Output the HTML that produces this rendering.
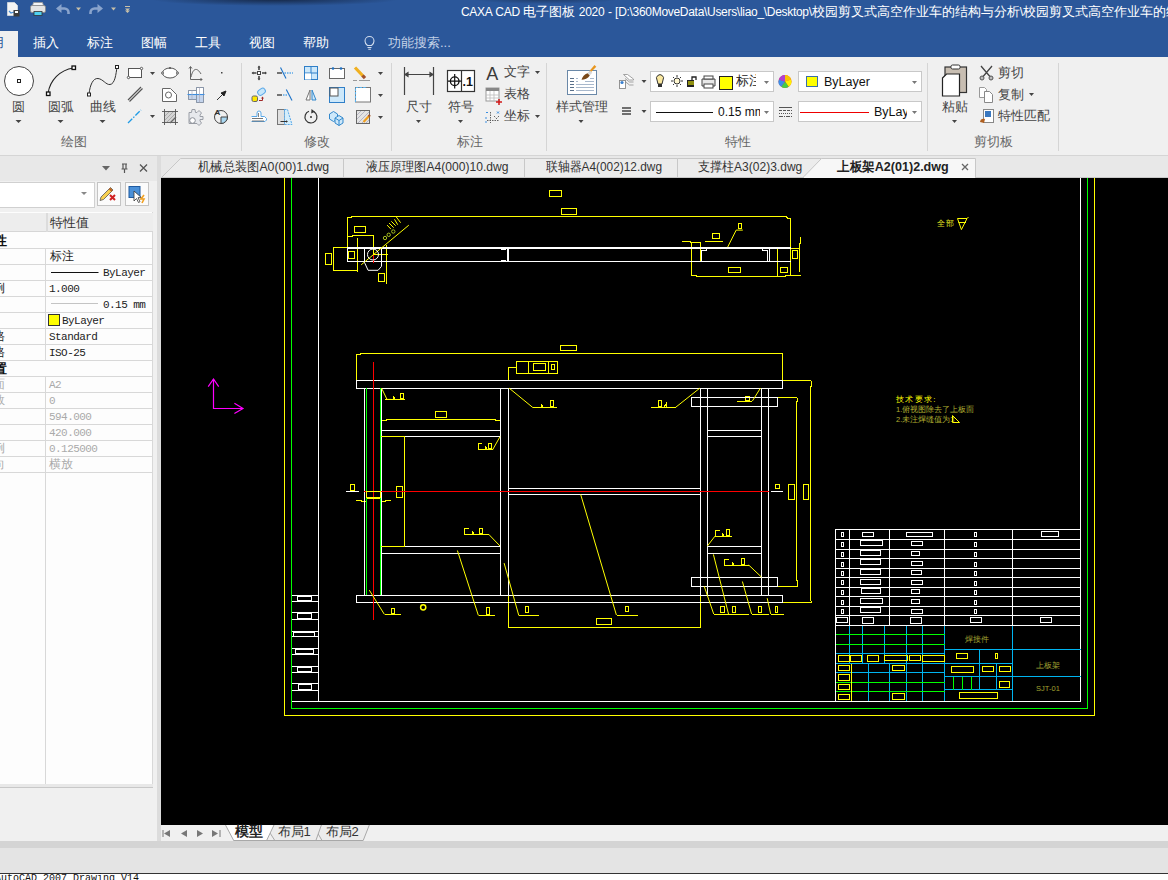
<!DOCTYPE html>
<html><head><meta charset="utf-8">
<style>
*{margin:0;padding:0;box-sizing:border-box}
html,body{width:1168px;height:880px;overflow:hidden;background:#f0f0f0;font-family:"Liberation Sans",sans-serif;position:relative}
.a{position:absolute;white-space:nowrap}
#hdr{left:0;top:0;width:1168px;height:57px;background:#2b579a}
.menu{color:#fff;font-size:13px;top:35px;line-height:16px}
#ribbon{left:0;top:57px;width:1168px;height:99px;background:#f0f0f0;border-bottom:1px solid #d5d5d5}
.rl{font-size:13px;color:#444;line-height:16px}
.mono{font-family:"Liberation Mono",monospace;font-size:11px;line-height:16px;letter-spacing:-0.55px}
.tab{top:159px;font-size:13px;color:#333;line-height:16px}
.z{font-size:13px;letter-spacing:0}
.sep{width:1px;background:#d5d5d5}
</style></head>
<body>
<div id="hdr" class="a"></div>
<div class="a" style="left:150px;top:-7px;width:250px;height:13px;background:radial-gradient(ellipse at center,rgba(15,25,45,0.75),rgba(15,25,45,0) 70%)"></div>
<div class="a" style="left:470px;top:-6px;width:150px;height:10px;background:radial-gradient(ellipse at center,rgba(15,25,45,0.5),rgba(15,25,45,0) 70%)"></div>
<div class="a" style="left:461px;top:5px;font-size:12px;color:#fff;line-height:14px;letter-spacing:-0.3px;word-spacing:0.5px">CAXA CAD <span class="z">电子图板</span> 2020 - [D:\360MoveData\Users\liao_\Desktop\<span class="z">校园剪叉式高空作业车的结构与分析</span>\<span class="z">校园剪叉式高空作业车的结构</span></div>
<!-- active menu tab -->
<div class="a" style="left:0;top:31px;width:18px;height:26px;background:#f0f0f0"></div>
<div class="a menu" style="left:-9px;color:#2b579a">用</div>
<div class="a menu" style="left:33px">插入</div>
<div class="a menu" style="left:87px">标注</div>
<div class="a menu" style="left:141px">图幅</div>
<div class="a menu" style="left:195px">工具</div>
<div class="a menu" style="left:249px">视图</div>
<div class="a menu" style="left:303px">帮助</div>
<div class="a menu" style="left:388px;color:#c5d3e8">功能搜索...</div>
<svg class="a" style="left:362px;top:35px" width="16" height="16"><path d="M5.5 10.5C3.5 9 3 7.5 3 6a4.5 4.5 0 0 1 9 0c0 1.5-.5 3-2.5 4.5z" fill="none" stroke="#d0dced" stroke-width="1.1"/><path d="M5.5 12.5h4M6.3 14.3h2.6" stroke="#d0dced" stroke-width="1.1"/></svg>

<div id="ribbon" class="a"></div>
<!-- ===== quick access ===== -->
<svg class="a" style="left:0;top:0" width="140" height="24" viewBox="0 0 140 24">
  <!-- save icon -->
  <path d="M7.5 2.5h7l3 3v10h-10z" fill="#f4f4f4" stroke="#c9d2dd"/>
  <path d="M9 11l2 2 3-1" stroke="#4a8fd6" fill="none" stroke-width="1.2"/>
  <rect x="13.5" y="10" width="6" height="6.5" fill="#3d3d3d"/>
  <rect x="15" y="11" width="3" height="2" fill="#fff"/>
  <!-- printer -->
  <path d="M33.5 2.5h9l1 3h-11z" fill="#f4f4f4" stroke="#999" stroke-width="0.8"/>
  <rect x="30.5" y="5.5" width="15" height="7" rx="1.5" fill="#e4e4e4" stroke="#888" stroke-width="0.8"/>
  <rect x="34" y="11.5" width="8" height="4" fill="#4fd0f0" stroke="#333" stroke-width="0.8"/>
  <!-- undo -->
  <path d="M56 8.5L61.5 4V13z" fill="#8aa4cc"/>
  <path d="M61 8.5h3.5a4 4 0 0 1 4 4v1.5" stroke="#8aa4cc" stroke-width="2.6" fill="none"/>
  <path d="M76 7.5h5l-2.5 3z" fill="#c8c0a8"/>
  <!-- redo -->
  <path d="M103 8.5L97.5 4V13z" fill="#8aa4cc"/>
  <path d="M98 8.5h-3.5a4 4 0 0 0-4 4v1.5" stroke="#8aa4cc" stroke-width="2.6" fill="none"/>
  <path d="M111 7.5h5l-2.5 3z" fill="#c8c0a8"/>
  <path d="M125 6.5h5" stroke="#c8c0a8" stroke-width="1"/><path d="M125 8.5h5l-2.5 2.5z M125 10.5h5l-2.5 2.5z" fill="#c8c0a8"/>
</svg>

<!-- ===== ribbon: 绘图 ===== -->
<svg class="a" style="left:0;top:57px" width="1168" height="99" viewBox="0 57 1168 99">
 <g fill="none" stroke="#3a3a3a" stroke-width="1">
  <circle cx="19" cy="81" r="14.5" fill="#fff" stroke="#444"/>
  <rect x="17.5" y="79.5" width="3" height="3" fill="#fff" stroke="#222"/>
  <path d="M48 93.5C50 80 60 70 73.5 68" stroke="#222" stroke-width="1.1"/>
  <rect x="46.5" y="92" width="3.5" height="3.5" fill="#fff" stroke="#111" stroke-width="1.3"/>
  <rect x="72" y="66" width="3.5" height="3.5" fill="#fff" stroke="#111" stroke-width="1.3"/>
  <path d="M89 94C90 85 93 78 98 78.5C103 79 106 85 110 84.5C115 84 116 74 117 67" stroke="#333"/>
  <rect x="87.5" y="93" width="3" height="3" fill="#fff" stroke="#222"/>
  <rect x="115.5" y="65.5" width="3" height="3" fill="#fff" stroke="#222"/>
  <!-- small icons -->
  <rect x="128.5" y="68.5" width="13" height="9" fill="#fff" stroke="#555"/>
  <circle cx="128.5" cy="77.5" r="1.2" fill="#fff" stroke="#555"/>
  <circle cx="141.5" cy="68.5" r="1.2" fill="#fff" stroke="#555"/>
  <ellipse cx="170" cy="73" rx="7.5" ry="5" fill="#fff" stroke="#555"/><circle cx="162.5" cy="73" r="1" fill="#fff" stroke="#555"/><circle cx="177.5" cy="73" r="1" fill="#fff" stroke="#555"/><circle cx="170" cy="68" r="1" fill="#555" stroke="none"/>
  <path d="M190.5 67v12.5H202M189 68.5l1.5-2 1.5 2M200.5 78l1.5 1.5-1.5 1.5M191 77C193 68 197 67 201 74" stroke="#555" stroke-width="0.9"/>
  <rect x="221" y="72" width="1.5" height="1.5" fill="#444" stroke="none"/>
  <path d="M128 100l13-13M129.5 101.5l13-13" stroke="#555" stroke-width="1.2"/>
  <path d="M162.5 101.5v-13h8l6 6v7z" fill="#fff" stroke="#666"/>
  <circle cx="168.5" cy="95" r="3" stroke="#666"/>
  <path d="M188.5 90.5h8v9h-8z" fill="#fff" stroke="#8a96a8"/><path d="M188.5 95h8v4.5h-8z" fill="#c4d4ec" stroke="none"/><path d="M196.5 87.5h7v15h-7z" fill="#fff" stroke="#8a96a8"/><path d="M196.5 95h7v7.5h-7z" fill="#c4d4ec" stroke="none"/><path d="M196.5 87.5h7v15h-7zM188.5 90.5h8v9h-8z" fill="none" stroke="#8a96a8"/><path d="M187.5 94.5h17" stroke="#3e8ee0" stroke-width="1.1"/><path d="M192 90.5v9M199.5 87.5v15" stroke="#aab" stroke-width="0.7"/>
  <path d="M217 100l5-5" stroke="#333"/>
  <path d="M226 91l-5 2 3 3z" fill="#222" stroke="#222"/>
  <path d="M128 123l13-13" stroke="#1e9be6" stroke-width="1.3" stroke-dasharray="6 1.5 1.5 1.5"/>
  <rect x="164.5" y="111.5" width="11" height="11" fill="#d4d4d4" stroke="none"/><path d="M165 116l4-4M165 120l8-8M167 122l8-8M171 122l4-4" stroke="#a0a0a0" stroke-width="0.8"/><path d="M162 111.5h16M162 122.5h16M164.5 109v16M175.5 109v16" stroke="#555" stroke-width="0.9"/><path d="M170 123l6-6" stroke="#666" stroke-width="1.2"/>
  <path d="M189 112.5h2.5l.5-3h3l.5 3h1.5l2-2 2.5 2.5-1.5 2v1.5h3v3h-3v1.5l1.5 2-2.5 2.5-2-2h-8z" fill="#e6e8ec" stroke="#9a9ea6"/>
  <circle cx="192.5" cy="120.5" r="2.8" fill="#fff" stroke="#8a8e96"/>
  <circle cx="221" cy="117" r="6.5" stroke="#444"/>
  <path d="M221 117h6.5a6.5 6.5 0 0 1-6.5 6.5z" fill="#aad8f2" stroke="#444"/>
 </g>
 <g fill="#444">
  <path d="M15.5 120h6l-3 3z"/><path d="M57.5 120h6l-3 3z"/><path d="M99.5 120h6l-3 3z"/>
  <path d="M150 72h5l-2.5 3z"/><path d="M150 115h5l-2.5 3z"/>
 </g>
 <text x="214.5" y="115" font-size="8" font-weight="bold" fill="#333" font-family="Liberation Sans">A</text>
 <!-- separators -->
 <g stroke="#d5d5d5"><path d="M241.5 63v88M391.5 63v88M546.5 63v88M927.5 63v88M1058.5 63v88"/></g>

 <!-- ===== 修改 ===== -->
 <g fill="none" stroke="#444">
  <path d="M252.5 73h4M262 73h4M259 66.5v3.5M259 76v3.5" stroke="#444" stroke-width="1.6"/><path d="M251.5 73l2-1.5v3zM267 73l-2-1.5v3zM259 65.5l-1.5 2h3zM259 80.5l-1.5-2h3z" fill="#444" stroke="none"/><rect x="257.5" y="71.5" width="3" height="3" fill="#fff" stroke="#444"/>
  <path d="M277 73h5" stroke="#555" stroke-width="1.6"/><path d="M284.5 73h8.5" stroke="#5aa8e8" stroke-width="1.4" stroke-dasharray="1.5 1"/><path d="M280.5 67.5l5.5 11" stroke="#1e73c8" stroke-width="1.1"/>
  <rect x="304.5" y="66.5" width="13" height="13" fill="#cde8fa" stroke="#2f7fc8"/><path d="M311 66v14M304 73h14" stroke="#2f7fc8"/><rect x="305" y="73.5" width="6" height="6" fill="#fff" stroke="none"/>
  <rect x="329.5" y="68.5" width="15" height="10" fill="#fff" stroke="#666"/><circle cx="333" cy="68.5" r="1.3" fill="#1e6fc0" stroke="none"/><circle cx="341" cy="68.5" r="1.3" fill="#1e6fc0" stroke="none"/>
  <path d="M355 67.5l8.5 9" stroke="#f0b020" stroke-width="3.2"/><path d="M362.5 75.5l2.5 2.7" stroke="#a0522d" stroke-width="3.2"/><path d="M353 80.5h4M359 80.5h11" stroke="#999"/>
  <rect x="257.5" y="89" width="8" height="5.5" rx="2.5" transform="rotate(-35 261.5 91.7)" fill="#c6e6fa" stroke="#5aa8e8"/><rect x="252" y="96" width="5.5" height="5.5" rx="1.5" fill="#ffe800" stroke="#666"/><path d="M259 100.5h3.5v-2.5" stroke="#a02828" stroke-width="1"/><path d="M261 98.5l1.5-2 1.5 2z" fill="#a02828" stroke="none"/>
  <path d="M277 95h5" stroke="#555" stroke-width="1.6"/><path d="M283 95h5" stroke="#5aa8e8" stroke-width="1.4" stroke-dasharray="1.5 1"/><path d="M286.3 89.5l5.7 11" stroke="#1e73c8" stroke-width="1.1"/>
  <path d="M310 90l-4 10h4z" fill="#fff" stroke="#777"/><path d="M312 90l4 10h-4z" fill="#cde8fa" stroke="#3388cc"/>
  <rect x="329.5" y="87.5" width="15" height="15" fill="#cde8fa" stroke="#2f7fc8"/><rect x="330" y="88" width="8" height="8" fill="#fff" stroke="#555"/>
  <rect x="355.5" y="87.5" width="15" height="14.5" fill="#fff" stroke="#777"/><path d="M355.5 102V87.5H367" stroke="#5ab4f0" stroke-dasharray="2.5 1.2" stroke-width="1.1"/>
  <path d="M251.5 116.5h5.5v-3.5a2 2 0 0 1 4 0v3.5h3.5l2 2v1.5l-1.5 1.5H251.5" fill="#fff" stroke="#5aa8e8"/><path d="M252 118.5h11M252 121h12" stroke="#666" stroke-width="0.9"/><path d="M258.5 113v4" stroke="#666" stroke-width="0.8"/>
  <rect x="277.5" y="109.5" width="7" height="15" fill="#e0e0e0" stroke="#777"/><path d="M284.5 109.5h3l4.5 15h-7.5z" fill="#d4eefc" stroke="#5aa8e8" stroke-dasharray="2 1"/><path d="M280.5 121.5h6.5" stroke="#333"/><path d="M288 121.5l-2-1.3v2.6z" fill="#333" stroke="none"/>
  <path d="M309 111.3A6 6 0 1 0 314 111.8" stroke="#333" stroke-width="1.2"/><path d="M311.5 109l3.5 2.8-3.8 1.8z" fill="#333" stroke="none"/><circle cx="311" cy="117" r="1" fill="#333" stroke="none"/>
  <path d="M329.5 114l4-2.5 4 2.5v5l-4 2.5-4-2.5z" fill="#cde8fa" stroke="#3388cc"/><path d="M335 118l4-2.5 4 2.5v5l-4 2.5-4-2.5z" fill="#cde8fa" stroke="#3388cc"/><path d="M335 118l4 2.5 4-2.5M339 120.5v5" stroke="#3388cc"/>
  <rect x="356.5" y="110.5" width="13" height="13" fill="#e4e4e4" stroke="#666"/><path d="M357 115l4-4M357 119l8-8M358 123l11-11M362 123l7-7M366 123l3-3" stroke="#aab" stroke-width="0.8"/><path d="M363.5 122l6-6.5" stroke="#f0a020" stroke-width="2.2"/><path d="M368.5 116.5l1.5-1.5" stroke="#a0522d" stroke-width="2.2"/>
 </g>
 <g fill="#444"><path d="M378 72h5l-2.5 3z"/><path d="M378 94h5l-2.5 3z"/><path d="M378 116h5l-2.5 3z"/></g>

 <!-- ===== 标注 ===== -->
 <g fill="none" stroke="#444" stroke-width="1.2">
  <path d="M404.5 67v28M433.5 67v28M405 74.5h28"/>
  <path d="M405 74.5l3-2v4zM433 74.5l-3-2v4z" fill="#444"/>
  <rect x="447.5" y="70.5" width="27" height="21" fill="#fff" stroke="#333"/><path d="M461.5 70v22" stroke="#333"/>
  <circle cx="454.7" cy="81.2" r="4.3" stroke="#111" stroke-width="1.3"/><path d="M448 81.2h13.5M454.7 74v14.5" stroke="#111" stroke-width="1.2"/>
  <rect x="486" y="88" width="13" height="13" fill="#fff" stroke="#999" stroke-width="1"/><rect x="486" y="88" width="13" height="3" fill="#888" stroke="none"/>
  <path d="M490 91v10M494 91v10M486 95h13M486 98h13" stroke="#bbb" stroke-width="0.8"/>
  <path d="M496 102h6M499 99v6" stroke="#d01818" stroke-width="1.5"/>
  <path d="M490.5 112v11M487 120.5h12M494 116l3 3M499 116l-3 3" stroke="#555" stroke-width="0.9" stroke-dasharray="1.5 1"/><path d="M486 112.5h2M497 111.5l2 2M499 111.5l-2 2M486 121v2M486 117v2" stroke="#3a8ee0" stroke-width="1"/>
 </g>
 <text x="486.3" y="79.6" font-size="18" fill="#3a3a3a" font-family="Liberation Sans">A</text>
 <text x="462.5" y="86" font-size="12.5" font-weight="bold" fill="#111" font-family="Liberation Sans">.1</text>
 <g fill="#444"><path d="M416 120h5l-2.5 3z"/><path d="M458 120h5l-2.5 3z"/><path d="M535 71h5l-2.5 3z"/><path d="M535 115h5l-2.5 3z"/></g>

 <!-- ===== 特性 ===== -->
 <rect x="567.5" y="70.5" width="29" height="24" fill="#fff" stroke="#6a88a8" shape-rendering="crispEdges"/>
 <g stroke-width="1" shape-rendering="crispEdges"><path d="M570 78.5h4M570 81.5h4M570 84.5h4M570 87.5h4M570 90.5h4" stroke="#5a708a"/><path d="M576 78.5h2M590 78.5h4M576 81.5h2M585 81.5h9M576 84.5h18M576 87.5h18M576 90.5h18" stroke="#a8b8cc"/></g>
 <path d="M589 71.5l5.5-6.5 1.8 1.8-6 6z" fill="#e8961e"/><path d="M587.5 73l2.5-2.5 2.3 2.3-2.5 2.5z" fill="#d8d8d8"/>
 <path d="M587.5 73.2l2.3 2.3c-2 3-5 4.3-8.3 4.3 0.8-3 3-5.5 6-6.6z" fill="#7a4818"/>
 <g fill="#444"><path d="M578.5 120h5l-2.5 3z"/><path d="M641.5 80h5l-2.5 3z"/><path d="M641.5 110h5l-2.5 3z"/></g>
 <path d="M623.5 74.5h4l6 4.5v1h-4z" fill="#fff" stroke="#999" stroke-width="0.9"/><path d="M625 78.5l4.5 3.5h4M625 81.5l4.5 3.5h4" fill="none" stroke="#999" stroke-width="0.9"/>
 <rect x="619.5" y="80.5" width="6" height="8" fill="#fff" stroke="#888" stroke-width="0.9"/><circle cx="622" cy="82.5" r="1.6" fill="#3a80d0"/>
 <path d="M622 108h9M622 111h9M622 114h9" stroke="#444" stroke-width="1.3"/>
 <!-- combos -->
 <g fill="#fff" stroke="#c8c8c8">
  <rect x="650.5" y="71.5" width="123" height="20"/>
  <rect x="650.5" y="101.5" width="123" height="20"/>
  <rect x="798.5" y="71.5" width="123" height="20"/>
  <rect x="798.5" y="101.5" width="123" height="20"/>
 </g>
 <g fill="#777"><path d="M764 81h5l-2.5 3z"/><path d="M764 111h5l-2.5 3z"/><path d="M912 81h5l-2.5 3z"/><path d="M912 111h5l-2.5 3z"/></g>
 <!-- bulb -->
 <path d="M657 80a3.5 3.5 0 1 1 6 0l-1 4h-4z" fill="#fbe9a0" stroke="#333"/><rect x="658" y="84" width="4" height="3" fill="#333"/>
 <circle cx="677" cy="81" r="3" fill="#fff7d0" stroke="#333"/><path d="M677 75v2M677 85v2M671 81h2M681 81h2M673 77l1 1M680 84l1 1M681 77l-1 1M674 84l-1 1" stroke="#333"/>
 <path d="M687 80h7v7h-7z" fill="#222"/><path d="M688 82h6M688 84h6" stroke="#ff0"/><path d="M692 80v-3h4v3" fill="none" stroke="#222" stroke-width="1.3"/>
 <path d="M702 79h13v7h-13z" fill="#e8e8e8" stroke="#444"/><rect x="704" y="76" width="9" height="3" fill="#fff" stroke="#444"/><rect x="704" y="84" width="9" height="4" fill="#fff" stroke="#444"/>
 <rect x="719.5" y="76.5" width="13" height="13" fill="#ffff00" stroke="#222"/>
 <path d="M656 112.5h57" stroke="#111" shape-rendering="crispEdges"/>
 <circle cx="785" cy="81.5" r="6.5" fill="#e33"/><path d="M785 81.5l0-6.5a6.5 6.5 0 0 1 6.2 4.5z" fill="#f9c400"/><path d="M785 81.5l6.2-2a6.5 6.5 0 0 1-2.5 7.2z" fill="#fff000"/><path d="M785 81.5l3.7 5.3a6.5 6.5 0 0 1-7.5 0z" fill="#4c4"/><path d="M785 81.5l-3.8 5.3a6.5 6.5 0 0 1-2.3-7.4z" fill="#3a8ee8"/><path d="M785 81.5l-6.1-2a6.5 6.5 0 0 1 6.1-4.5z" fill="#b040d0"/>
 <g stroke="#555" stroke-width="1" shape-rendering="crispEdges"><path d="M779 107.5h13"/><path d="M779 110.5h13" stroke-dasharray="3 1"/><path d="M779 113.5h13" stroke-dasharray="1 1"/><path d="M779 116.5h13" stroke-dasharray="4 1 1 1"/></g>
 <rect x="806.5" y="76.5" width="11" height="10" fill="#ffff00" stroke="#3a6ea8"/>
 <path d="M800 112.5h69" stroke="#e00" stroke-width="1" shape-rendering="crispEdges"/>

 <!-- ===== 剪切板 ===== -->
 <rect x="945" y="67" width="21.5" height="25.5" fill="#c8beb2" stroke="#333" stroke-width="1.2"/>
 <rect x="951" y="65" width="9" height="4" rx="1.5" fill="#fff" stroke="#333"/>
 <path d="M942.5 78l4-4h13v22h-17z" fill="#fff" stroke="#222" stroke-width="1.2"/>
 <path d="M981 66l11 13M992 66l-11 13" stroke="#444" stroke-width="1.3"/><circle cx="982" cy="78" r="2" fill="#bbb" stroke="#555"/><circle cx="991" cy="78" r="2" fill="#bbb" stroke="#555"/>
 <path d="M979.5 87.5h5l2 2v8h-7z" fill="#fff" stroke="#999"/><path d="M984.5 91.5h5l3 3v8h-8z" fill="#fff" stroke="#888"/>
 <rect x="983.5" y="109.5" width="10" height="13" fill="#fff" stroke="#888"/><rect x="985" y="111" width="6" height="6" fill="#3a78c0"/>
 <path d="M980 122c0-3 3-4 5-3l-1 4z" fill="#b06020"/>
 <g fill="#444"><path d="M952 120h5l-2.5 3z"/><path d="M1029 93h5l-2.5 3z"/></g>
</svg>
<!-- ribbon labels -->
<div class="a rl" style="left:12px;top:99px;font-size:12.5px">圆</div>
<div class="a rl" style="left:48px;top:99px;font-size:12.5px">圆弧</div>
<div class="a rl" style="left:90px;top:99px;font-size:12.5px">曲线</div>
<div class="a rl" style="left:61px;top:134px;color:#666">绘图</div>
<div class="a rl" style="left:304px;top:134px;color:#666">修改</div>
<div class="a rl" style="left:406px;top:99px">尺寸</div>
<div class="a rl" style="left:448px;top:99px">符号</div>
<div class="a rl" style="left:504px;top:64px">文字</div>
<div class="a rl" style="left:504px;top:86px">表格</div>
<div class="a rl" style="left:504px;top:108px">坐标</div>
<div class="a rl" style="left:457px;top:134px;color:#666">标注</div>
<div class="a rl" style="left:556px;top:99px">样式管理</div>
<div class="a rl" style="left:725px;top:134px;color:#666">特性</div>
<div class="a" style="left:736px;top:73px;font-size:13px;color:#222;width:20px;overflow:hidden;line-height:16px">标注</div>
<div class="a" style="left:718px;top:104px;font-size:12px;color:#111;line-height:16px;width:42px;overflow:hidden">0.15 mm</div>
<div class="a" style="left:824px;top:74px;font-size:12.5px;color:#111;line-height:16px">ByLayer</div>
<div class="a" style="left:874px;top:104px;font-size:12.5px;color:#111;line-height:16px;width:33px;overflow:hidden">ByLayer</div>
<div class="a rl" style="left:942px;top:99px">粘贴</div>
<div class="a rl" style="left:998px;top:65px">剪切</div>
<div class="a rl" style="left:998px;top:87px">复制</div>
<div class="a rl" style="left:998px;top:108px">特性匹配</div>
<div class="a rl" style="left:974px;top:134px;color:#666">剪切板</div>


<!-- left panel -->
<div class="a" style="left:0;top:156px;width:161px;height:685px;background:#f0f0f0"></div>
<div class="a" style="left:0;top:156px;width:157px;height:25px;background:#e8e8e8"></div>
<div class="a" style="left:157px;top:156px;width:4px;height:685px;background:#dcdcdc"></div>
<!-- grid -->
<div class="a" style="left:0;top:212px;width:153px;height:572px;background:#fdfdfd;border-right:1px solid #d8d8d8"></div>

<!-- tab bar -->
<div class="a" style="left:161px;top:156px;width:1007px;height:22px;background:#e8e8e8"></div>
<!-- canvas -->
<div class="a" style="left:161px;top:178px;width:1007px;height:647px;background:#000"></div>
<!--CAD-->
<svg class="a" style="left:161px;top:178px" width="1007" height="647" viewBox="161 178 1007 647">
<g fill="none" stroke-width="1" shape-rendering="crispEdges">
 <!-- frames -->
 <path d="M284.5 170V715.5H1094.5V170" stroke="#ff0"/>
 <path d="M291.5 170V708.5H1087.5V170" stroke="#0f0"/>
 <path d="M318.5 170V701.5H1080.5V170M292 701.5H318.5" stroke="#fff"/>

 <!-- ===== top view ===== -->
 <g stroke="#ff0">
  <path d="M347.5 247V217.5H351l1-1H786l1.5 1.5h3V275.5"/>
  <rect x="354.5" y="226.5" width="11" height="6"/>
  <path d="M347.5 236.5H352l1-1h20.5V261"/>
  <path d="M357.5 238V271.5M356.5 244h1"/>
  <path d="M357.5 247.5H333.5V270.5H357.5"/>
  <path d="M333.5 249.5h-1M333.5 268.5h-1"/>
  <rect x="325.5" y="253.5" width="6" height="11"/>
  <rect x="348.5" y="251.5" width="6" height="7"/>
  <path d="M386.5 245V283.5"/>
  <rect x="378.5" y="273.5" width="6" height="8"/>
  <path d="M373 254.5H387.5"/>
  <path d="M337.5 270.5h20"/>
  <rect x="549.5" y="190.5" width="12" height="6"/>
  <rect x="561.5" y="208.5" width="15" height="6"/>
  <!-- right end -->
  <path d="M691.5 241.5V275.5H696l1 1h88l1-1h14.5"/>
  <path d="M682 241.5H690l1 1h9.5M700.5 242V261M705 241.5h18"/>
  <rect x="712.5" y="233.5" width="7" height="5"/>
  <rect x="738.5" y="223.5" width="3" height="5"/>
  <rect x="728.5" y="267.5" width="12" height="5"/>
  <rect x="780.5" y="267.5" width="7" height="5"/>
  <path d="M777.5 248V275.5"/>
  <rect x="792.5" y="250.5" width="5" height="8"/>
  <path d="M790.5 248.5h9.5M800.5 237V243l-1 1V271.5"/>
 </g>
 <g stroke="#fff">
  <path d="M347 248H790.5" stroke-width="2"/>
  <path d="M347 261.5H790.5"/>
  <path d="M347.5 248V261.5"/>
  <path d="M507.5 248V261.5" stroke-width="2"/>
  <path d="M501 249.5h5M501 260.5h5"/>
  <path d="M701.5 250V261M767.5 250V261M769.5 248V261.5"/>
  <path d="M702 250.5h4l1 -1M767 250.5h-4l-1-1"/>
 </g>
 <path d="M373 263V255" stroke="#f00" stroke-width="1"/>
</g>
<g fill="none" stroke-width="1">
 <path d="M361.2 264.8L408.8 225.2" stroke="#ff0"/>
 
 <path d="M364.5 249V262.5L368.1 270.3H378.1L381.5 266.3V249" stroke="#fff"/>
 <circle cx="373" cy="254.5" r="5.5" stroke="#fff"/>
 <path d="M396.3 217L400.6 222.7M394.5 219.3L397.7 224.7M391.3 221.3L395.7 225.7M389.1 223.1L393.7 227.7M387.1 225.1L390.9 229.1" stroke="#ff0"/>
 <g stroke="#a8c020" stroke-width="1"><circle cx="393.3" cy="231.5" r="1.7"/><circle cx="388.7" cy="234.8" r="1.7"/><circle cx="385" cy="238" r="1.7"/></g>
 <path d="M727.7 247L736.2 230.1H742.8" stroke="#ff0"/>
</g>

<!-- ===== front view ===== -->
<g fill="none" stroke-width="1" shape-rendering="crispEdges">
 <g stroke="#ff0">
  <path d="M356.5 380V354.5H360l1-1H782.5V380"/>
  <rect x="560.5" y="345.5" width="16" height="5"/>
  <rect x="516.5" y="361.5" width="41" height="12"/>
  <path d="M528.5 362V373M548.5 362V373"/>
  <rect x="533.5" y="363.5" width="12" height="7"/>
  <rect x="551.5" y="364.5" width="3" height="5"/>
  <path d="M516 367.5H508.5V380"/>
  <!-- outer right bracket -->
  <path d="M782.5 380.5H810.5l1 1V386l-1 1V600l1 1.5V602.5H782.5"/>
  <path d="M777.5 397.5H796.5l1 1V401l-1 1V580l1 1V586.5H777.5"/>
  <!-- left inner -->
  <path d="M381 420.5H386l1-1H495l1 1H500.5V410.5"/>
  <path d="M500.5 419.5V430"/>
  <rect x="435.5" y="411.5" width="11" height="6"/>
  <path d="M404.5 436.5V546.5M381 436.5H404.5"/>
  <path d="M500.5 553.5V574"/>
  <path d="M508.5 595V627.5H700.5V595"/>
  <rect x="596.5" y="618.5" width="15" height="6"/>

  <path d="M356 500.5H361l1 1h5M380 501.5h5l1-1H391"/>
  <rect x="396.5" y="486.5" width="6" height="11"/>
  <rect x="350.5" y="484.5" width="4" height="6"/>
  <rect x="775.5" y="484.5" width="4" height="4"/>
  <rect x="788.5" y="484.5" width="6" height="15"/>
  <rect x="803.5" y="484.5" width="5" height="15"/>
  <!-- small symbols -->
  <path d="M384.5 399.5H404.5"/><rect x="400.5" y="393.5" width="3" height="5"/>
  <path d="M393 399v-3l2 3"/>
  <path d="M533 407.5H556.5"/><rect x="550.5" y="400.5" width="3" height="6"/><path d="M541 407v-3l2 3"/>
  <path d="M651 407.5H675.5"/><rect x="658.5" y="400.5" width="3" height="6"/><path d="M664 407l2-3v3"/>
  <path d="M737 401.5H752"/><rect x="745.5" y="396.5" width="4" height="4"/>
  <path d="M478.5 449.5H492.5M478.5 449.5v-6h3M485 449v-3l2 3"/><rect x="488.5" y="443.5" width="3" height="5"/>
  <path d="M464.5 534.5H488.5M464.5 534.5v-6h4M472 534v-3l2 3"/><rect x="479.5" y="528.5" width="3" height="5"/>
  <path d="M715.5 536.5H731.5M715.5 536.5v-6h4M722 536v-3l2 3"/><rect x="726.5" y="529.5" width="3" height="6"/>
  <path d="M724.5 565.5H748.5M724.5 565.5v-6h4M732 565v-3l2 3"/><rect x="741.5" y="558.5" width="3" height="6"/>
  <path d="M384.5 614.5H401"/><rect x="391.5" y="608.5" width="3" height="5"/>
  <path d="M478.5 615.5H494.5"/><rect x="486.5" y="607.5" width="3" height="7"/>
  <path d="M616.5 615.5H637.5"/><path d="M518.5 615.5H538.5"/><rect x="525.5" y="606.5" width="3" height="6"/><rect x="625.5" y="606.5" width="3" height="5"/>
  <path d="M713.5 614.5H748.5M751.5 614.5H768.5M770.5 614.5H784"/>
  <rect x="720.5" y="606.5" width="4" height="6"/><rect x="732.5" y="606.5" width="3" height="6"/>
  <rect x="758.5" y="606.5" width="3" height="6"/><rect x="775.5" y="606.5" width="2" height="6"/>
  <path d="M420 602.5h7"/>
 </g>
 <g stroke="#fff">
  <path d="M356.5 380.5H782.5V388.5H356.5Z"/>
  <path d="M364.5 388V595M381.5 388V595M500.5 388V595M508.5 388V595M700.5 388V595M707.5 388V595M761.5 388V595M768.5 388V595"/>
  <path d="M381 430.5H500.5M381 436.5H500.5M381 546.5H500.5M381 553.5H500.5"/>
  <path d="M508.5 488.5H700.5M508.5 494.5H700.5"/>
  <path d="M707.5 430.5H761.5M707.5 436.5H761.5M707.5 546.5H761.5M707.5 553.5H761.5"/>
  <path d="M691.5 397.5H777.5V406.5H691.5Z"/>
  <path d="M691.5 577.5H777.5V586.5H691.5Z"/>
  <path d="M356.5 595.5H782.5V602.5H356.5Z"/>
  <path d="M346 491.5H359M771 491.5H783"/>
 </g>
 <path d="M381 488.5H500.5M381 494.5H500.5" stroke="none"/>
 <path d="M373.5 362V620" stroke="#f00"/>
 <path d="M364 491.5H768.5" stroke="#f00"/>
 <path d="M366.5 388V595M380.5 388V595" stroke="#0f0"/>
 <g stroke="#ff0"><rect x="366.5" y="491.5" width="14" height="6"/><path d="M367 498.5H380M381 546.5H404.5M381 436.5H404.5"/></g>
</g>
<g fill="none" stroke="#ff0" stroke-width="1">
 <path d="M381.5 388L387 399.4H391"/>
 <path d="M509 388L532.9 407.6"/>
 <path d="M700 388L675.3 407.6"/>
 <path d="M760.5 388L752.4 401"/>
 <path d="M500 436.7L492.6 449.8"/>
 <path d="M500 546L488.7 534.3"/>
 <path d="M707.4 546L715 536.1"/>
 <path d="M761.4 577L748.7 565"/>
 <path d="M369.3 590.1L384.4 614.4"/>
 <path d="M457.4 550.5L478.4 615.5"/>
 <path d="M504.1 563.1L518.8 615.5"/>
 <path d="M580.7 494.5L616.4 615"/>
 <path d="M713.4 554.4L728.5 614"/>
 <path d="M704.2 586.2L713.7 614"/>
 <path d="M742.4 581.5L751.6 614"/>
 <path d="M767.2 598.2L770.7 614"/>
 <circle cx="423.2" cy="607.3" r="2.6" stroke-width="1.5"/>
</g>

<!-- left table -->
<g fill="none" stroke="#fff" stroke-width="1" shape-rendering="crispEdges">
 <path d="M292 595.5H318M292 601.5H318M292 612.5H318M292 619.5H318M292 631.5H318M292 636.5H318M292 648.5H318M292 654.5H318M292 666.5H318M292 672.5H318M292 683.5H318M292 690.5H318"/>
 <rect x="297.5" y="596.5" width="14" height="4"/>
 <rect x="297.5" y="613.5" width="14" height="5"/>
 <rect x="293.5" y="632.5" width="21" height="4"/>
 <rect x="295.5" y="649.5" width="18" height="4"/>
 <rect x="297.5" y="667.5" width="14" height="4"/>
 <rect x="298.5" y="684.5" width="13" height="5"/>
</g>

<!-- UCS -->
<g fill="none" stroke="#f0f" stroke-width="1.2">
 <path d="M213.5 379V408.5H243"/>
 <path d="M208.2 386.7L213.5 379L218.7 386.7M234.4 403.2L243 408.5L234.4 413.4"/>
</g>

<!-- title block -->
<g fill="none" stroke-width="1" shape-rendering="crispEdges">
 <g stroke="#fff">
  <path d="M835.5 701V529.5H1080.5"/>
  <path d="M835.5 539.5H1080.5M835.5 549.5H1080.5M835.5 558.5H1080.5M835.5 568.5H1080.5M835.5 577.5H1080.5M835.5 587.5H1080.5M835.5 596.5H1080.5M835.5 606.5H1080.5M835.5 615.5H1080.5M835.5 625.5H1080.5"/>
  <path d="M849.5 529.5V625.5M889.5 529.5V625.5M944.5 529.5V625.5M1012.5 529.5V625.5"/>
  <rect x="841.5" y="532.5" width="2" height="4"/><rect x="841.5" y="542.5" width="2" height="4"/><rect x="841.5" y="552.5" width="2" height="4"/>
  <rect x="841.5" y="562.5" width="2" height="4"/><rect x="841.5" y="571.5" width="2" height="4"/><rect x="841.5" y="580.5" width="2" height="4"/>
  <rect x="841.5" y="590.5" width="2" height="4"/><rect x="841.5" y="600.5" width="2" height="4"/><rect x="841.5" y="609.5" width="2" height="4"/>
  <rect x="836.5" y="617.5" width="11" height="5"/>
  <rect x="862.5" y="532.5" width="11" height="4"/>
  <rect x="860.5" y="540.5" width="22" height="5"/><rect x="860.5" y="550.5" width="20" height="5"/><rect x="860.5" y="559.5" width="20" height="5"/>
  <rect x="860.5" y="569.5" width="20" height="5"/><rect x="860.5" y="579.5" width="20" height="5"/><rect x="861.5" y="588.5" width="19" height="5"/>
  <rect x="860.5" y="598.5" width="22" height="5"/><rect x="860.5" y="607.5" width="20" height="5"/>
  <rect x="862.5" y="617.5" width="11" height="6"/>
  <rect x="906.5" y="532.5" width="26" height="4"/>
  <rect x="911.5" y="541.5" width="11" height="4"/><rect x="911.5" y="551.5" width="8" height="4"/><rect x="911.5" y="561.5" width="11" height="4"/>
  <rect x="911.5" y="570.5" width="10" height="4"/><rect x="911.5" y="580.5" width="11" height="4"/><rect x="911.5" y="589.5" width="8" height="4"/>
  <rect x="911.5" y="599.5" width="8" height="4"/><rect x="911.5" y="609.5" width="11" height="4"/>
  <rect x="910.5" y="617.5" width="11" height="6"/>
  <rect x="974.5" y="532.5" width="2" height="4"/><rect x="974.5" y="542.5" width="2" height="4"/><rect x="974.5" y="552.5" width="2" height="4"/>
  <rect x="974.5" y="562.5" width="2" height="4"/><rect x="974.5" y="571.5" width="2" height="4"/><rect x="974.5" y="581.5" width="2" height="4"/>
  <rect x="974.5" y="590.5" width="2" height="4"/><rect x="974.5" y="600.5" width="2" height="4"/><rect x="974.5" y="609.5" width="2" height="4"/>
  <rect x="970.5" y="617.5" width="11" height="5"/>
  <rect x="1041.5" y="531.5" width="17" height="5"/>
  <rect x="1040.5" y="617.5" width="11" height="5"/>
 </g>
 <g stroke="#00b4f0">
  <path d="M849.5 626V663M862.5 626V663M884.5 626V663M906.5 626V663M922.5 626V663"/>
  <path d="M835.5 653.5H944.5M835.5 663.5H1012.5M835.5 672.5H944.5M944.5 689.5H1012.5"/>
  <path d="M944.5 626V701M1012.5 626V701"/>
  <path d="M868.5 663.5V701M889.5 663.5V701M906.5 663.5V701M922.5 663.5V701"/>
  <path d="M944.5 649.5H1080.5M944.5 676.5H1080.5"/>
  <path d="M979.5 649.5V689.5M996.5 663.5V689.5"/>
 </g>
 <g stroke="#0f0">
  <path d="M835.5 634.5H944.5M835.5 644.5H944.5M835.5 682.5H944.5M835.5 691.5H944.5"/>
  <path d="M953.5 676.5V689.5M962.5 676.5V689.5M971.5 676.5V689.5"/>
 </g>
 <g stroke="#ff0">
  <path d="M851.5 663.5V701"/>
  <rect x="838.5" y="655.5" width="11" height="6"/><rect x="850.5" y="655.5" width="11" height="6"/><rect x="867.5" y="655.5" width="11" height="6"/>
  <rect x="884.5" y="655.5" width="23" height="5"/><rect x="909.5" y="655.5" width="11" height="5"/><rect x="922.5" y="655.5" width="22" height="6"/>
  <rect x="838.5" y="665.5" width="11" height="5"/><rect x="838.5" y="674.5" width="11" height="6"/><rect x="838.5" y="684.5" width="11" height="5"/><rect x="838.5" y="694.5" width="11" height="5"/>
  <rect x="892.5" y="665.5" width="12" height="5"/><rect x="892.5" y="693.5" width="12" height="6"/>
  <rect x="956.5" y="653.5" width="11" height="5"/><rect x="995.5" y="653.5" width="2" height="5"/>
  <rect x="951.5" y="666.5" width="22" height="6"/><rect x="982.5" y="666.5" width="11" height="5"/><rect x="999.5" y="666.5" width="11" height="5"/>
  <rect x="999.5" y="681.5" width="10" height="6"/><rect x="959.5" y="692.5" width="38" height="6"/>
 </g>
</g>
<g font-family="Liberation Sans" >
 <text x="977" y="641.5" font-size="8" fill="#a0a030" text-anchor="middle">焊接件</text>
 <text x="1048" y="667.5" font-size="8" fill="#a0a030" text-anchor="middle">上板架</text>
 <text x="1048" y="690.5" font-size="7.5" fill="#a0a030" text-anchor="middle">SJT-01</text>
 <text x="896" y="401.5" font-size="8" fill="#ff0" letter-spacing="1.3">技术要求:</text>
 <text x="896" y="411.5" font-size="7.5" fill="#b0b030" letter-spacing="0">1.俯视图除去了上板面</text>
 <text x="896" y="422" font-size="7.5" fill="#b0b030" letter-spacing="0">2.未注焊缝值为3</text>
 <text x="937" y="226" font-size="8" fill="#e0e020" letter-spacing="0.5">全部</text>
</g>
<g fill="none" stroke="#ff0" stroke-width="1">
 <path d="M952.5 415.5V422.5H959.5Z"/>
 <path d="M957.5 218.5H967L961.4 229.6L957.5 218.5ZM958.5 222.5H966M967 218.5L968.5 217"/>
</g>

</svg>

<!-- bottom tabs -->
<div class="a" style="left:161px;top:825px;width:1007px;height:16px;background:#f0f0f0"></div>
<div class="a" style="left:0;top:841px;width:1168px;height:7px;background:#d4d4d4"></div>
<div class="a" style="left:0;top:848px;width:1168px;height:25px;background:#e4e4e4"></div>
<div class="a" style="left:0;top:873px;width:1168px;height:7px;background:#fff;border-top:1px solid #333"></div>
<!-- panel header icons -->
<svg class="a" style="left:95px;top:158px" width="60" height="22">
 <path d="M7 8h8l-4 4.5z" fill="#666"/>
 <path d="M27 6h5M28 6v5h3v-5M26.5 11h6M29.5 11v4" stroke="#555" stroke-width="1.2" fill="none"/>
 <path d="M45 6.5l7 7M52 6.5l-7 7" stroke="#555" stroke-width="1.3"/>
</svg>
<!-- combobox -->
<div class="a" style="left:-2px;top:182px;width:97px;height:26px;background:#fff;border:1px solid #d0d0d0"></div>
<svg class="a" style="left:80px;top:190px" width="10" height="8"><path d="M1 2h6l-3 3z" fill="#888"/></svg>
<div class="a" style="left:97px;top:182px;width:24px;height:24px;background:#fbfbfb;border:1px solid #c4c4c4"></div>
<div class="a" style="left:125px;top:182px;width:24px;height:24px;background:#fbfbfb;border:1px solid #c4c4c4"></div>
<svg class="a" style="left:97px;top:182px" width="54" height="24">
 <path d="M4 15l9.5-9.5 2.5 2.5-9.5 9.5-3.5 1z" fill="#f8d050" stroke="#555" stroke-width="0.8"/>
 <path d="M12.5 6.5l2.5 2.5" stroke="#c06020" stroke-width="2"/>
 <path d="M13 13l5 5M18 13l-5 5" stroke="#d02020" stroke-width="2"/>
 <rect x="32" y="4.5" width="11" height="11" fill="#4a90d8" stroke="#1e5aa0"/>
 <path d="M37 9v10l2.5-2.5 2 4 1.5-.8-2-4 3.5 0z" fill="#fff" stroke="#333" stroke-width="0.8"/>
 <path d="M47 13l-3 4h3l-2 4" stroke="#f0a020" stroke-width="1.6" fill="none"/>
</svg>
<!-- grid -->
<div class="a" style="left:0;top:213px;width:153px;height:19px;background:#ededed;border-bottom:1px solid #d6d6d6"></div>
<div class="a" style="left:46px;top:213px;width:2px;height:19px;background:#dcdcdc"></div>
<div class="a" style="left:50px;top:215px;font-size:12.5px;color:#333;line-height:16px">特性值</div>
<svg class="a" style="left:0;top:232px" width="154" height="560">
 <g stroke="#d8d8d8" stroke-width="1" fill="none">
  <path d="M0 16.5h153M0 32.5h153M0 48.5h153M0 64.5h153M0 80.5h153M0 96.5h153M0 112.5h153M0 128.5h153M0 144.5h153M0 160.5h153M0 176.5h153M0 192.5h153M0 208.5h153M0 224.5h153M0 240.5h153"/>
  <path d="M45.5 16v112M45.5 144v408"/>
 </g>
 <path d="M51 40.5h47.5" stroke="#111"/>
 <path d="M51 71.5h47" stroke="#c4c4c4"/>
 <rect x="48.5" y="82.5" width="11" height="11" fill="#ffff00" stroke="#333"/>
</svg>
<div class="a" style="left:0;top:784px;width:153px;height:4px;background:#e8e8e8;border-bottom:1px solid #c8c8c8"></div>
<div class="a" style="left:-6px;top:233px;font-size:13px;font-weight:bold;color:#111;line-height:16px">性</div>
<div class="a" style="left:-6px;top:361px;font-size:13px;font-weight:bold;color:#111;line-height:16px">置</div>
<div class="a" style="left:50px;top:249px;font-size:12px;color:#222;line-height:15px">标注</div>
<div class="a" style="left:-7px;top:281px;font-size:12px;color:#222;line-height:15px">例</div>
<div class="a" style="left:-7px;top:329px;font-size:12px;color:#222;line-height:15px">格</div>
<div class="a" style="left:-7px;top:345px;font-size:12px;color:#222;line-height:15px">格</div>
<div class="a" style="left:-7px;top:377px;font-size:12px;color:#aaa;line-height:15px">面</div>
<div class="a" style="left:-7px;top:393px;font-size:12px;color:#aaa;line-height:15px">数</div>
<div class="a" style="left:-7px;top:441px;font-size:12px;color:#aaa;line-height:15px">例</div>
<div class="a" style="left:-7px;top:457px;font-size:12px;color:#aaa;line-height:15px">向</div>
<div class="a mono" style="left:103px;top:265px;color:#222">ByLayer</div>
<div class="a mono" style="left:49px;top:281px;color:#222">1.000</div>
<div class="a mono" style="left:103px;top:297px;color:#222">0.15 mm</div>
<div class="a mono" style="left:62px;top:313px;color:#222">ByLayer</div>
<div class="a mono" style="left:49px;top:329px;color:#222">Standard</div>
<div class="a mono" style="left:49px;top:345px;color:#222">ISO-25</div>
<div class="a mono" style="left:49px;top:377px;color:#aaa">A2</div>
<div class="a mono" style="left:49px;top:393px;color:#aaa">0</div>
<div class="a mono" style="left:49px;top:409px;color:#aaa">594.000</div>
<div class="a mono" style="left:49px;top:425px;color:#aaa">420.000</div>
<div class="a mono" style="left:49px;top:441px;color:#aaa">0.125000</div>
<div class="a" style="left:49px;top:457px;font-size:12px;color:#aaa;line-height:15px">横放</div>

<!-- doc tabs -->
<svg class="a" style="left:161px;top:156px" width="1007" height="22">
 <g fill="#ececec" stroke="#c8c8c8">
  <path d="M0.5 21.5L19.5 2.5H182.5V21.5"/>
  <path d="M182.5 21.5V2.5H363.5V21.5"/>
  <path d="M363.5 21.5V2.5H516.5V21.5"/>
  <path d="M516.5 21.5V2.5H660.5L643 21.5"/>
 </g>
 <path d="M642 21.5L660.5 2.5H814.5V21.5" fill="#f7f7f7" stroke="#c8c8c8"/>
 <path d="M801 8l6 6M807 8l-6 6" stroke="#666" stroke-width="1.3"/>
 <path d="M0 21.5h1007" stroke="#c8c8c8"/>
 <path d="M643 21.5h171" stroke="#f7f7f7" stroke-width="1.5"/>
</svg>
<div class="a tab" style="left:197.7px;transform:scaleX(0.945);transform-origin:0 0">机械总装图A0(00)1.dwg</div>
<div class="a tab" style="left:365.5px;transform:scaleX(0.930);transform-origin:0 0">液压原理图A4(000)10.dwg</div>
<div class="a tab" style="left:546.0px;transform:scaleX(0.912);transform-origin:0 0">联轴器A4(002)12.dwg</div>
<div class="a tab" style="left:697.8px;transform:scaleX(0.925);transform-origin:0 0">支撑柱A3(02)3.dwg</div>
<div class="a tab" style="left:836.7px;font-weight:bold;color:#222;transform:scaleX(0.967);transform-origin:0 0">上板架A2(01)2.dwg</div>

<!-- bottom tabs -->
<svg class="a" style="left:161px;top:825px" width="300" height="16">
 <g fill="#777">
  <path d="M2 5v7" stroke="#777"/><path d="M9 5v7l-6-3.5z"/>
  <path d="M26 5v7l-6-3.5z"/>
  <path d="M36 5v7l6-3.5z"/>
  <path d="M51 5v7l6-3.5z"/><path d="M59 5v7" stroke="#777"/>
 </g>
 <path d="M152 0L161 15.5H202.2L208.3 0" fill="#ececec" stroke="#a8a8a8"/>
 <path d="M104 0L113.8 15.5H154.9L160.4 0" fill="#ececec" stroke="#a8a8a8"/>
 <path d="M64.5 0L72.7 15.5H105.6L113 0" fill="#fff" stroke="#a8a8a8"/>
 <path d="M72.7 15.5H202" stroke="#a8a8a8"/>
</svg>
<div class="a" style="left:235px;top:824px;font-size:13.5px;font-weight:bold;color:#222;line-height:16px">模型</div>
<div class="a" style="left:278px;top:824px;font-size:13px;color:#333;line-height:16px;letter-spacing:-0.3px">布局1</div>
<div class="a" style="left:326px;top:824px;font-size:13px;color:#333;line-height:16px;letter-spacing:-0.3px">布局2</div>
<div class="a" style="left:-5px;top:873px;font-family:'Liberation Mono',monospace;font-size:10px;color:#111;line-height:12px">AutoCAD 2007 Drawing V14</div>

</body></html>
